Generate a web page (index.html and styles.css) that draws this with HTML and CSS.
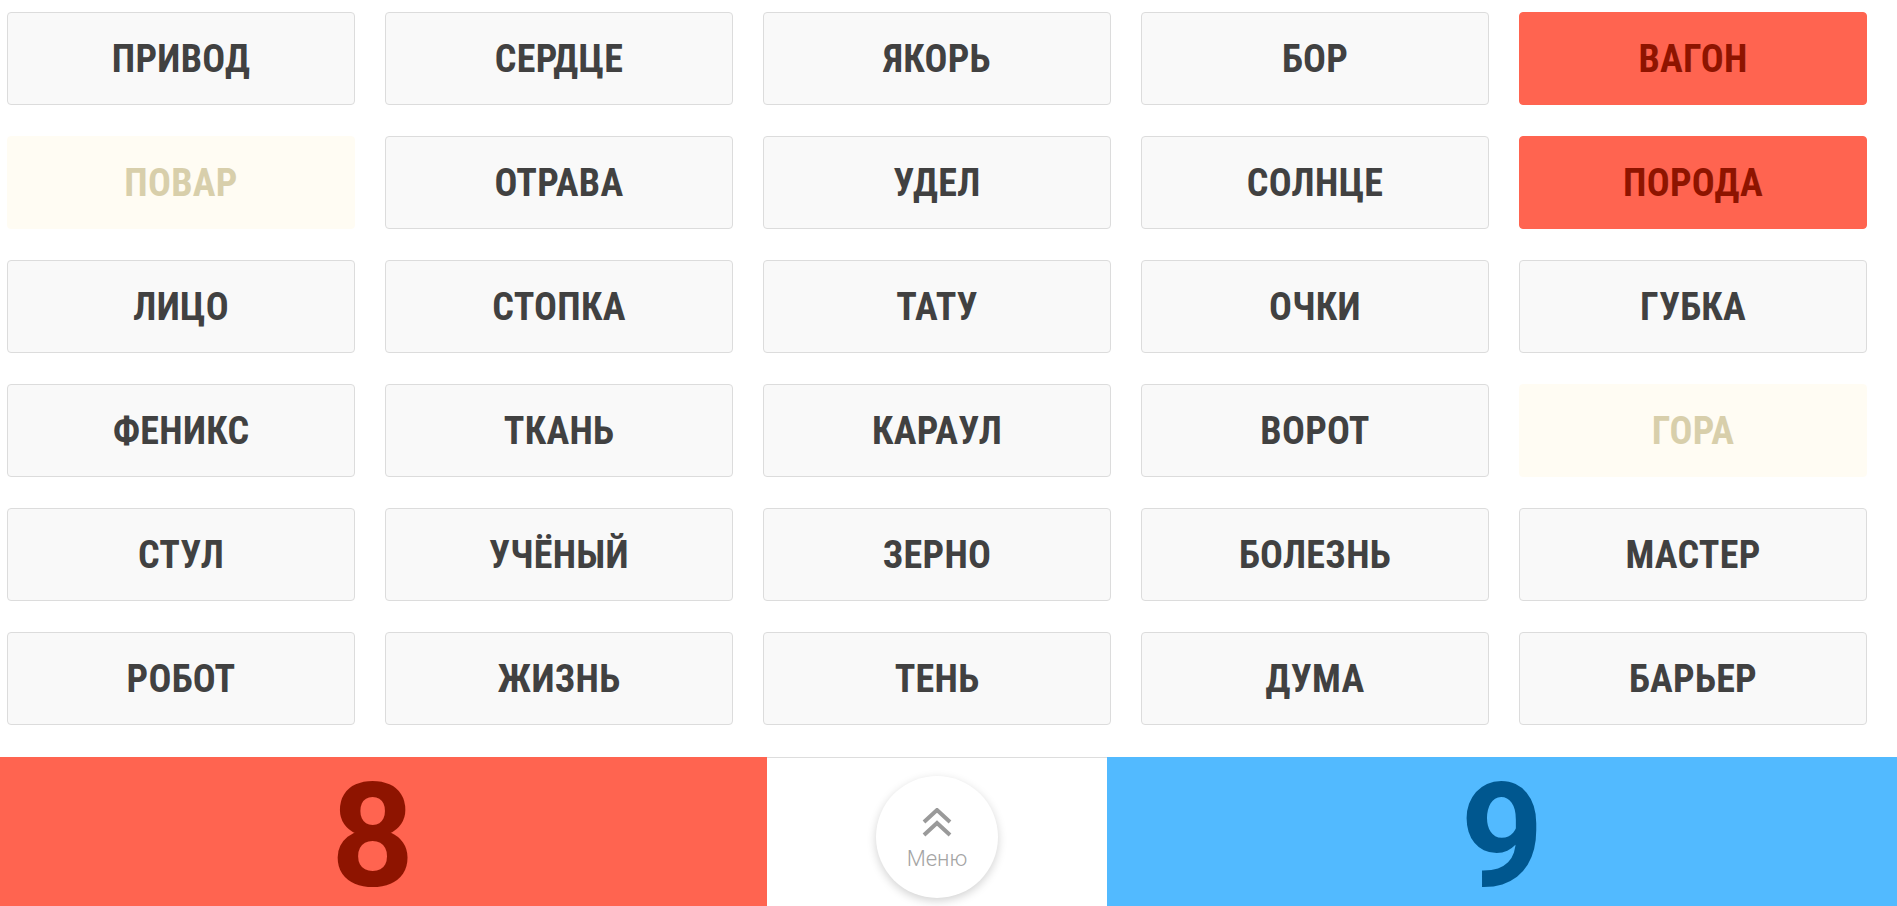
FILE: index.html
```html
<!DOCTYPE html>
<html lang="ru">
<head>
<meta charset="utf-8">
<title>Кодовые имена</title>
<link rel="stylesheet" href="styles.css">
</head>
<body>
<main class="board">
  <div class="card">ПРИВОД</div>
  <div class="card">СЕРДЦЕ</div>
  <div class="card">ЯКОРЬ</div>
  <div class="card">БОР</div>
  <div class="card card-red">ВАГОН</div>

  <div class="card card-neutral">ПОВАР</div>
  <div class="card">ОТРАВА</div>
  <div class="card">УДЕЛ</div>
  <div class="card">СОЛНЦЕ</div>
  <div class="card card-red">ПОРОДА</div>

  <div class="card">ЛИЦО</div>
  <div class="card">СТОПКА</div>
  <div class="card">ТАТУ</div>
  <div class="card">ОЧКИ</div>
  <div class="card">ГУБКА</div>

  <div class="card">ФЕНИКС</div>
  <div class="card">ТКАНЬ</div>
  <div class="card">КАРАУЛ</div>
  <div class="card">ВОРОТ</div>
  <div class="card card-neutral">ГОРА</div>

  <div class="card">СТУЛ</div>
  <div class="card">УЧЁНЫЙ</div>
  <div class="card">ЗЕРНО</div>
  <div class="card">БОЛЕЗНЬ</div>
  <div class="card">МАСТЕР</div>

  <div class="card">РОБОТ</div>
  <div class="card">ЖИЗНЬ</div>
  <div class="card">ТЕНЬ</div>
  <div class="card">ДУМА</div>
  <div class="card">БАРЬЕР</div>
</main>
<footer class="scorebar">
  <div class="score score-red"><span class="score-num">8</span></div>
  <div class="menu-zone">
    <button class="menu-btn" type="button">
      <svg class="menu-icon" width="30" height="30" viewBox="0 0 30 30" aria-hidden="true">
        <path d="M2 14 L15 2 L28 14" fill="none" stroke="#9a9a9a" stroke-width="4"/>
        <path d="M2 27 L15 15 L28 27" fill="none" stroke="#9a9a9a" stroke-width="4"/>
      </svg>
      <span class="menu-label">Меню</span>
    </button>
  </div>
  <div class="score score-blue"><span class="score-num">9</span></div>
</footer>
</body>
</html>
```

FILE: styles.css
```css
html, body {
  margin: 0;
  padding: 0;
  background: #ffffff;
  height: 906px;
  overflow: hidden;
  font-family: Roboto, "Noto Sans", "Liberation Sans", sans-serif;
}

.board {
  display: grid;
  grid-template-columns: repeat(5, 348px);
  grid-auto-rows: 93px;
  column-gap: 30px;
  row-gap: 31px;
  padding: 12px 0 32px 7px;
}

.card {
  display: flex;
  align-items: center;
  justify-content: center;
  box-sizing: border-box;
  background: #f9f9f9;
  border: 1px solid #dcdcdc;
  border-radius: 4px;
  color: #414141;
  font-size: 38px;
  font-weight: 700;
  font-stretch: condensed;
  letter-spacing: 0.3px;
}

.card-red {
  background: #ff6450;
  border-color: #ff6450;
  color: #8e1400;
}

.card-neutral {
  background: #fffcf3;
  border-color: #fffcf3;
  color: #d8cfab;
}

.scorebar {
  display: flex;
  height: 149px;
}

.score {
  display: flex;
  justify-content: center;
  align-items: flex-start;
}

.score-red {
  width: 767px;
  box-sizing: border-box;
  padding-right: 22px;
  background: #ff6450;
  color: #8e1400;
}

.score-blue {
  flex: 1;
  background: #52baff;
  color: #00578f;
}

.score-num {
  display: block;
  font-size: 145px;
  font-weight: 700;
  font-stretch: 93%;
  line-height: 139px;
  padding-top: 10px;
}

.menu-zone {
  width: 340px;
  box-sizing: border-box;
  border-top: 1px solid #dddddd;
  display: flex;
  align-items: center;
  justify-content: center;
}

.menu-btn {
  width: 122px;
  height: 122px;
  border-radius: 50%;
  border: none;
  background: #ffffff;
  box-shadow: 0 3px 10px rgba(0, 0, 0, 0.18);
  display: flex;
  flex-direction: column;
  align-items: center;
  justify-content: center;
  padding: 0;
  margin-top: 10px;
  cursor: pointer;
}

.menu-icon {
  display: block;
  margin-top: 4px;
}

.menu-label {
  font-family: Roboto, "Noto Sans", sans-serif;
  font-weight: 300;
  font-size: 22px;
  color: #a4a4a4;
  margin-top: 8px;
}
```
